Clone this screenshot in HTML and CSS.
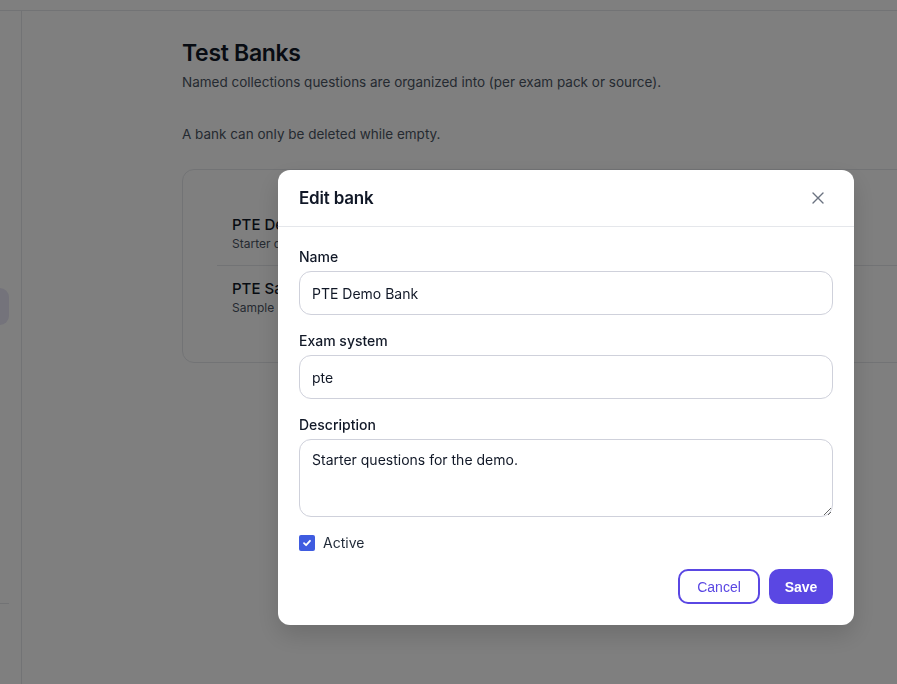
FILE: index.html
```html
<!DOCTYPE html>
<html lang="en">
<head>
  <meta charset="UTF-8">
  <meta name="viewport" content="width=device-width, initial-scale=1.0">
  <title>Test Banks</title>
  <link rel="stylesheet" href="styles.css">
</head>
<body>
  <!-- Top bar -->
  <header class="topbar"></header>

  <div class="layout">
    <!-- Sidebar (collapsed) -->
    <aside class="sidebar">
      <div class="side-item active"></div>
      <div class="side-rule"></div>
    </aside>

    <!-- Main content -->
    <main class="content">
      <h1 class="page-title">Test Banks</h1>
      <p class="page-sub">Named collections questions are organized into (per exam pack or source).</p>
      <p class="page-note">A bank can only be deleted while empty.</p>

      <section class="bank-card">
        <div class="bank-row">
          <div class="bank-name">PTE Demo Bank</div>
          <div class="bank-desc">Starter questions for the demo.</div>
        </div>
        <div class="bank-row">
          <div class="bank-name">PTE Sample Pack</div>
          <div class="bank-desc">Sample PTE questions from the official pack.</div>
        </div>
      </section>
    </main>
  </div>

  <!-- Edit dialog -->
  <div class="overlay">
    <div class="modal" role="dialog" aria-labelledby="modal-title">
      <div class="modal-head">
        <h2 id="modal-title">Edit bank</h2>
        <button class="close-btn" type="button" aria-label="Close">
          <svg width="14" height="14" viewBox="0 0 14 14" fill="none" stroke="currentColor" stroke-width="1.4" stroke-linecap="round">
            <path d="M2 2 L12 12 M12 2 L2 12"/>
          </svg>
        </button>
      </div>
      <form class="modal-body">
        <div class="field">
          <label class="field-label" for="bank-name">Name</label>
          <input id="bank-name" type="text" value="PTE Demo Bank">
        </div>
        <div class="field">
          <label class="field-label" for="bank-exam">Exam system</label>
          <input id="bank-exam" type="text" value="pte">
        </div>
        <div class="field">
          <label class="field-label" for="bank-desc">Description</label>
          <textarea id="bank-desc">Starter questions for the demo.</textarea>
        </div>
        <div class="check">
          <span class="check-box">
            <svg width="10" height="10" viewBox="0 0 10 10" fill="none" stroke="#fff" stroke-width="1.8" stroke-linecap="round" stroke-linejoin="round">
              <path d="M2 5.2 L4.1 7.2 L8 2.8"/>
            </svg>
          </span>
          <span>Active</span>
        </div>
        <div class="modal-actions">
          <button type="button" class="btn btn-outline">Cancel</button>
          <button type="submit" class="btn btn-primary">Save</button>
        </div>
      </form>
    </div>
  </div>
</body>
</html>
```

FILE: styles.css
```css
:root {
  --text: #111827;
  --muted: #4b5563;
  --border: #e5e7eb;
  --input-border: #cfd1db;
  --accent: #5a47e3;
  --check: #3f5ce0;
  --font-family: 'Inter', 'Noto Sans', sans-serif;
}
* {
  box-sizing: border-box;
  margin: 0;
  padding: 0;
}
body {
  font-family: var(--font-family);
  color: var(--text);
  background: #fff;
  width: 897px;
  height: 684px;
  overflow: hidden;
}
/* Top bar */
.topbar {
  height: 11px;
  border-bottom: 1px solid var(--border);
}
/* Layout */
.layout {
  display: flex;
  height: 673px;
}
.sidebar {
  width: 22px;
  flex-shrink: 0;
  border-right: 1px solid var(--border);
  padding-top: 277px;
}
.side-item {
  width: 9px;
  height: 37px;
  border-radius: 0 10px 10px 0;
  background: #e9e7f6;
}
.side-rule {
  width: 9px;
  margin-top: 278px;
  border-top: 1px solid var(--border);
}
.content {
  padding: 27px 0 0 160px;
  width: 1000px;
  flex-shrink: 0;
}
.page-title {
  font-size: 23px;
  font-weight: 600;
  letter-spacing: -0.3px;
  line-height: 30px;
}
.page-sub,
.page-note {
  font-size: 13.5px;
  color: var(--muted);
  line-height: 20px;
}
.page-sub {
  margin-top: 4px;
}
.page-note {
  margin-top: 32px;
}
/* Bank list card */
.bank-card {
  margin-top: 25px;
  border: 1px solid var(--border);
  border-radius: 12px;
  padding: 32px 0 33px 34px;
}
.bank-row {
  padding: 13px 0 13px 15px;
}
.bank-row + .bank-row {
  border-top: 1px solid var(--border);
}
.bank-name {
  font-size: 15px;
  font-weight: 500;
  line-height: 20px;
}
.bank-desc {
  font-size: 12px;
  color: var(--muted);
  line-height: 17px;
}
/* Dialog */
.overlay {
  position: fixed;
  inset: 0;
  background: rgba(0, 0, 0, 0.5);
}
.modal {
  position: absolute;
  left: 278px;
  top: 170px;
  width: 576px;
  background: #fff;
  border-radius: 12px;
  box-shadow: 0 10px 25px rgba(0, 0, 0, 0.15);
}
.modal-head {
  height: 57px;
  padding: 0 21px;
  display: flex;
  align-items: center;
  justify-content: space-between;
  border-bottom: 1px solid var(--border);
}
.modal-head h2 {
  font-size: 17px;
  font-weight: 600;
  letter-spacing: -0.2px;
}
.close-btn {
  border: none;
  background: none;
  color: #6b7280;
  display: flex;
  margin-right: 8px;
  cursor: pointer;
}
.modal-body {
  padding: 21px 21px 21px;
}
.field {
  margin-bottom: 17px;
}
.field-label {
  display: block;
  font-size: 14px;
  font-weight: 500;
  line-height: 18px;
  margin-bottom: 5px;
}
.field input,
.field textarea {
  display: block;
  width: 100%;
  border: 1px solid var(--input-border);
  border-radius: 12px;
  padding: 0 12px;
  font-family: var(--font-family);
  font-size: 14px;
  color: var(--text);
  background: #fff;
  outline: none;
}
.field input {
  height: 44px;
}
.field textarea {
  height: 78px;
  padding-top: 10px;
  resize: vertical;
  line-height: 20px;
}
/* Active checkbox */
.check {
  display: flex;
  align-items: center;
  gap: 8px;
  font-size: 14px;
  color: #1f2937;
  margin-top: 17px;
}
.check-box {
  width: 16px;
  height: 16px;
  border-radius: 2px;
  background: var(--check);
  display: flex;
  align-items: center;
  justify-content: center;
}
/* Footer buttons */
.modal-actions {
  display: flex;
  justify-content: flex-end;
  gap: 9px;
  margin-top: 18px;
}
.btn {
  height: 35px;
  border-radius: 10px;
  font-family: 'Liberation Sans', Arial, sans-serif;
  font-size: 14px;
  cursor: pointer;
}
.btn-outline {
  width: 82px;
  background: #fff;
  border: 2px solid var(--accent);
  color: var(--accent);
}
.btn-primary {
  width: 64px;
  background: var(--accent);
  border: none;
  color: #fff;
  font-weight: bold;
}
```
